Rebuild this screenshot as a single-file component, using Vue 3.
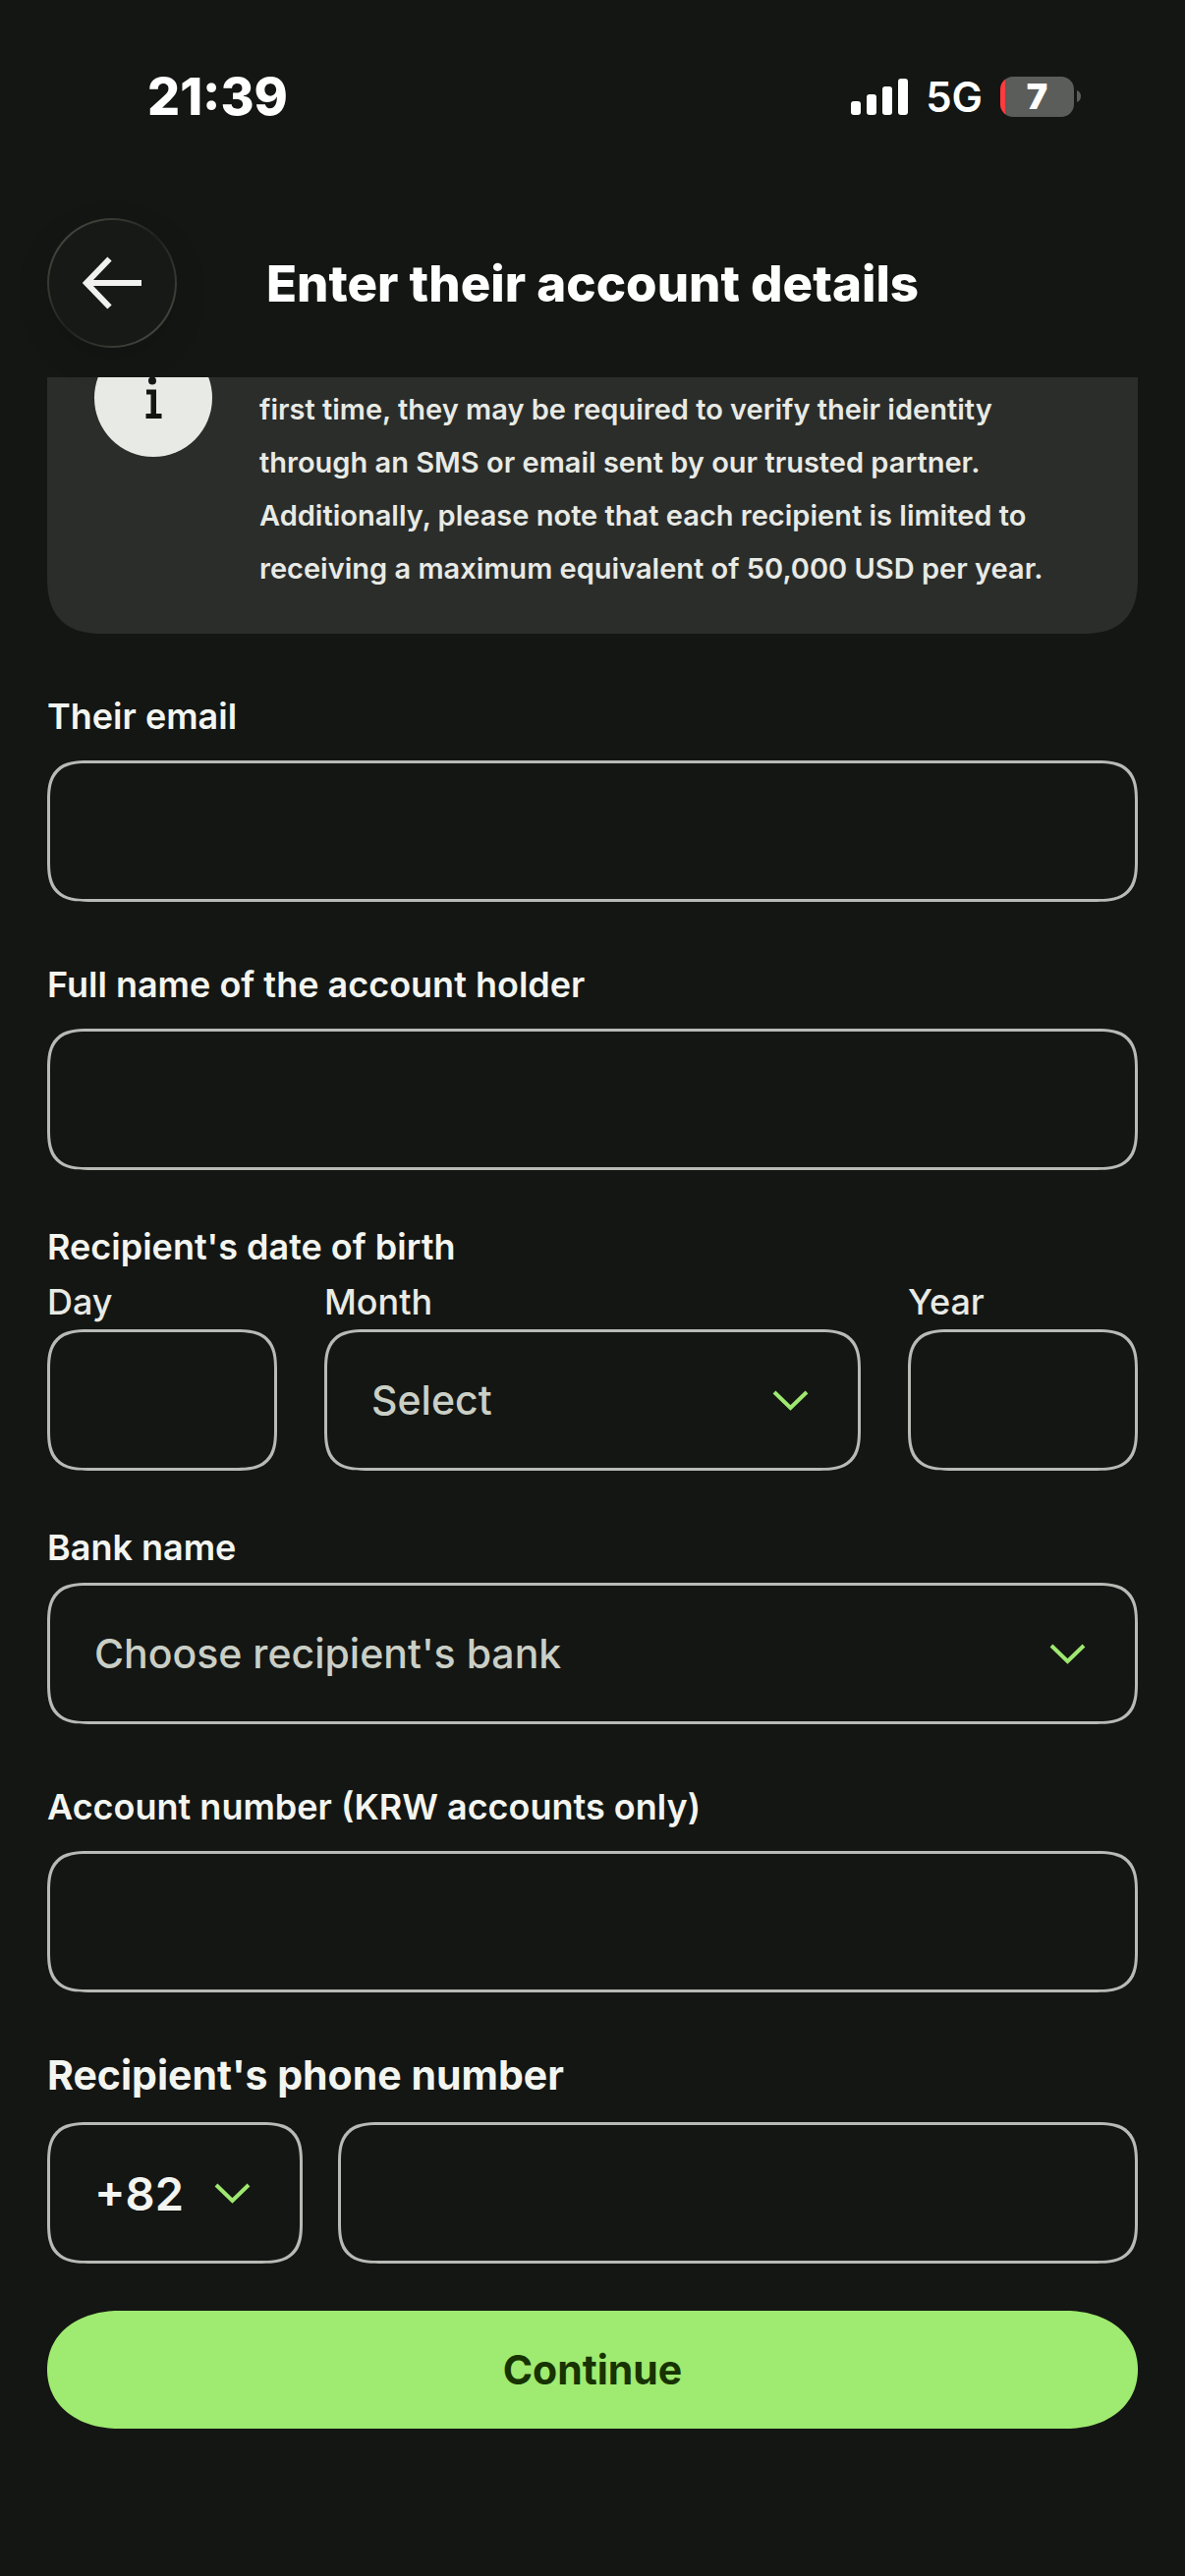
<script setup>
import { ref } from 'vue'

const email = ref('')
const fullName = ref('')
const day = ref('')
const month = ref('')
const year = ref('')
const bank = ref('')
const accountNumber = ref('')
const dialCode = ref('+82')
const phone = ref('')

const signalBars = [14, 21, 29, 37]
</script>

<template>
  <div class="page">
    <header>
      <div class="status-bar">
        <span class="time">21:39</span>
        <div class="status-icons">
          <svg class="signal" viewBox="0 0 58 37" aria-hidden="true">
            <rect
              v-for="(bar, index) in signalBars"
              :key="bar"
              :x="index * 16"
              :y="37 - bar"
              width="10"
              :height="bar"
              rx="3"
            />
          </svg>
          <span class="network">5G</span>
          <div class="battery">
            <span class="battery-level">7</span>
            <svg class="battery-cap" viewBox="0 0 4 12" aria-hidden="true">
              <path d="M0 0C2.600 1 4 3.300 4 6S2.600 11 0 12Z" />
            </svg>
          </div>
        </div>
      </div>

      <div class="nav">
        <button type="button" class="back-button" aria-label="Back">
          <svg viewBox="0 0 60 54" aria-hidden="true">
            <path d="M60 27H5M27.500 2.500L4 27L27.500 51.500" />
          </svg>
        </button>
        <h1 class="title">Enter their account details</h1>
      </div>
    </header>

    <main>
      <div class="notice">
        <svg class="notice-icon" viewBox="0 0 120 120" aria-hidden="true">
          <circle cx="60" cy="60" r="60" fill="#e8eae5" />
          <circle cx="59" cy="42.500" r="4" fill="#141613" />
          <path d="M53 51.500H63V76H68.500V81H52.500V76H57.500V56.500H53Z" fill="#141613" />
        </svg>
        <p class="notice-text">
          first time, they may be required to verify their identity through an SMS or email sent by
          our trusted partner. Additionally, please note that each recipient is limited to receiving
          a maximum equivalent of 50,000 USD per year.
        </p>
      </div>

      <form @submit.prevent>
        <div class="field">
          <label for="email">Their email</label>
          <input id="email" v-model="email" type="email" class="control" />
        </div>

        <div class="field">
          <label for="full-name">Full name of the account holder</label>
          <input id="full-name" v-model="fullName" type="text" class="control" />
        </div>

        <fieldset class="birth">
          <legend>Recipient's date of birth</legend>
          <div class="birth-row">
            <div class="birth-part">
              <label for="day">Day</label>
              <input id="day" v-model="day" type="text" inputmode="numeric" class="control" />
            </div>
            <div class="birth-part">
              <label for="month">Month</label>
              <div class="select-box">
                <select id="month" v-model="month" class="control">
                  <option value="">Select</option>
                </select>
                <svg class="chevron" viewBox="0 0 48 48" aria-hidden="true">
                  <path d="M8 16L24.500 32L41 16" />
                </svg>
              </div>
            </div>
            <div class="birth-part">
              <label for="year">Year</label>
              <input id="year" v-model="year" type="text" inputmode="numeric" class="control" />
            </div>
          </div>
        </fieldset>

        <div class="bank">
          <label for="bank">Bank name</label>
          <div class="select-box">
            <select id="bank" v-model="bank" class="control">
              <option value="">Choose recipient's bank</option>
            </select>
            <svg class="chevron" viewBox="0 0 48 48" aria-hidden="true">
              <path d="M8 16L24.500 32L41 16" />
            </svg>
          </div>
        </div>

        <div class="field">
          <label for="account-number">Account number (KRW accounts only)</label>
          <input
            id="account-number"
            v-model="accountNumber"
            type="text"
            inputmode="numeric"
            class="control"
          />
        </div>

        <div class="phone">
          <label for="phone">Recipient's phone number</label>
          <div class="phone-row">
            <div class="select-box">
              <select v-model="dialCode" class="control dial-code" aria-label="Country code">
                <option value="+82">+82</option>
              </select>
              <svg class="chevron" viewBox="0 0 48 48" aria-hidden="true">
                <path d="M8 16L24.500 32L41 16" />
              </svg>
            </div>
            <input id="phone" v-model="phone" type="tel" class="control" />
          </div>
        </div>

        <button type="submit" class="continue-button">Continue</button>
      </form>
    </main>
  </div>
</template>

<style>
body {
  background-color: #141613;
}
</style>

<style scoped>
.page {
  min-height: 100vh;
  box-sizing: border-box;
  background-color: #141613;
  color: #f3f5f0;
  font-family: Inter, 'Liberation Sans', sans-serif;
}

.status-bar {
  height: 196px;
  padding: 0 106px 0 150px;
  display: flex;
  justify-content: space-between;
  align-items: center;
  color: #fff;
}

.time {
  font-size: 52px;
  font-weight: 800;
}

.status-icons {
  display: flex;
  align-items: center;
  gap: 18px;
}

.signal {
  width: 58px;
  height: 37px;
  fill: #fff;
}

.network {
  font-size: 42px;
  font-weight: 600;
}

.battery {
  display: flex;
  align-items: center;
  gap: 3px;
}

.battery-level {
  width: 75px;
  height: 41px;
  border-radius: 13px;
  background: linear-gradient(to right, #ff3b3f 5px, #5b5d5a 5px);
  font-size: 36px;
  line-height: 41px;
  font-weight: 900;
  text-align: center;
}

.battery-cap {
  width: 4px;
  height: 12px;
  fill: #5b5d5a;
}

.nav {
  padding: 26px 48px 30px;
  display: grid;
  grid-template-columns: 132px 1fr 132px;
  align-items: center;
}

.back-button {
  width: 132px;
  height: 132px;
  padding: 0;
  border: 2px solid transparent;
  border-radius: 50%;
  background:
    linear-gradient(#171916, #171916) padding-box,
    linear-gradient(135deg, #41433c 15%, #20221f 50%, #41433c 85%) border-box;
  box-shadow: 0 12px 36px rgba(0, 0, 0, 0.1);
  display: flex;
  justify-content: center;
  align-items: center;
  cursor: pointer;
}

.back-button svg {
  width: 60px;
  height: 54px;
  fill: none;
  stroke: #f1f2f0;
  stroke-width: 6;
}

.title {
  margin: 0;
  color: #fff;
  font-size: 51px;
  font-weight: 800;
  text-align: center;
}

main {
  padding: 0 48px 48px;
}

.notice {
  padding: 6px 60px 39px 48px;
  border-radius: 0 0 48px 48px;
  background-color: #2b2d2a;
  display: flex;
  align-items: flex-start;
  gap: 48px;
  overflow: hidden;
}

/* the notice is scrolled partly under the header */
.notice-icon {
  width: 120px;
  height: 120px;
  margin-top: -45px;
  flex-shrink: 0;
}

.notice-text {
  margin: 0;
  color: #e8eae5;
  font-size: 29px;
  line-height: 54px;
  font-weight: 600;
}

label,
legend {
  padding: 0;
  font-size: 36px;
  line-height: 48px;
  font-weight: 600;
}

.field {
  padding-top: 60px;
  display: flex;
  flex-direction: column;
  gap: 21px;
}

.control {
  width: 100%;
  height: 144px;
  box-sizing: border-box;
  margin: 0;
  padding: 0 45px;
  border: 3px solid #b8bab6;
  border-radius: 34px;
  background-color: transparent;
  color: #cacfc6;
  font-family: inherit;
  font-size: 41px;
  font-weight: 500;
  appearance: none;
  outline: none;
}

.control:focus {
  border-color: #9fe870;
}

.select-box {
  position: relative;
}

.chevron {
  position: absolute;
  top: 48px;
  right: 48px;
  width: 48px;
  height: 48px;
  fill: none;
  stroke: #9fe870;
  stroke-width: 4;
  pointer-events: none;
}

.birth {
  min-width: 0;
  margin: 0;
  padding: 54px 0 0;
  border: none;
}

.birth legend {
  float: left;
  width: 100%;
  margin-bottom: 8px;
}

.birth-row {
  clear: both;
  display: grid;
  grid-template-columns: 3fr 7fr 3fr;
  gap: 48px;
}

.birth-part {
  min-width: 0;
  display: flex;
  flex-direction: column;
  gap: 4px;
}

.birth-part label {
  color: #e8eae5;
  font-weight: 500;
}

.bank {
  padding-top: 54px;
  display: flex;
  flex-direction: column;
  gap: 12px;
}

.phone {
  padding-top: 54px;
  display: flex;
  flex-direction: column;
  gap: 18px;
}

.phone > label {
  font-size: 41px;
  line-height: 60px;
  font-weight: 700;
}

.phone-row {
  display: flex;
  gap: 36px;
}

.phone-row > .control {
  flex: 1;
  min-width: 0;
}

.dial-code {
  width: auto;
  padding-right: 118px;
  color: #f3f5f0;
  font-size: 47px;
  font-weight: 600;
}

.continue-button {
  width: 100%;
  height: 120px;
  margin-top: 48px;
  border: none;
  border-radius: 60px;
  background-color: #9fea70;
  color: #163300;
  font-family: inherit;
  font-size: 41px;
  font-weight: 700;
  cursor: pointer;
}

/* smoother corners where the browser can draw them */
@supports (corner-shape: superellipse(1.5)) {
  .control {
    border-radius: 42px;
    corner-shape: superellipse(1.5);
  }

  .notice {
    border-radius: 0 0 60px 60px;
    corner-shape: superellipse(1.4);
  }

  .continue-button {
    border-radius: 74px / 60px;
    corner-shape: superellipse(1.1);
  }
}
</style>
